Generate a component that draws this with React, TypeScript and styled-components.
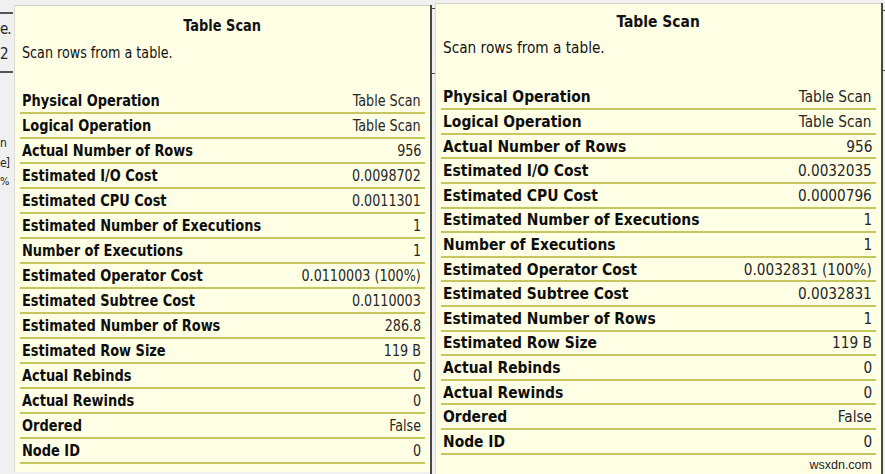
import React from "react";
import styled, { createGlobalStyle } from "styled-components";

const Global = createGlobalStyle`
  html, body { margin: 0; padding: 0; background: #f0f0f0; }
  body { width: 885px; height: 474px; overflow: hidden; }
`;

const Page = styled.div`
  display: flex;
  width: 885px;
  height: 474px;
  overflow: hidden;
  background: #f0f0f0;
  font-family: "DejaVu Sans Condensed", "DejaVu Sans", sans-serif;
`;

const Strip = styled.div`
  flex: none;
  width: 14px;
  display: flex;
  flex-direction: column;
  font-size: 15px;
  color: #222;
`;

const StripRule = styled.div<{ $mt: number }>`
  margin-top: ${(p) => p.$mt}px;
  height: 2px;
  width: 13px;
  background: #555;
`;

const StripText = styled.div<{ $mt: number; $fs?: number }>`
  margin-top: ${(p) => p.$mt}px;
  height: 16px;
  line-height: 16px;
  font-size: ${(p) => p.$fs ?? 15}px;
  white-space: nowrap;
  letter-spacing: -1px;
`;

const Panel = styled.div<{ $w: number; $top: number; $h: number }>`
  flex: none;
  box-sizing: border-box;
  width: ${(p) => p.$w}px;
  height: ${(p) => p.$h}px;
  margin-top: ${(p) => p.$top}px;
  background: #ffffe6;
  border-top: 1px solid #d2d2c4;
  border-left: 1px solid #dcdccf;
  overflow: hidden;
  color: #121212;
  font-size: 16px;
  display: flex;
  flex-direction: column;
`;

const Title = styled.div<{ $pt: number }>`
  padding-top: ${(p) => p.$pt}px;
  line-height: 20px;
  height: 20px;
  text-align: center;
  font-weight: bold;
`;

const Subtitle = styled.div<{ $mt: number }>`
  margin-top: ${(p) => p.$mt}px;
  padding-left: 7px;
  line-height: 20px;
  height: 20px;
`;

const Rows = styled.div<{ $mt: number }>`
  margin: ${(p) => p.$mt}px 5px 0 5px;
  display: flex;
  flex-direction: column;
`;

const Row = styled.div<{ $h: number }>`
  box-sizing: border-box;
  height: ${(p) => p.$h}px;
  border-bottom: 2px solid #c6c65e;
  display: flex;
  align-items: center;
  justify-content: space-between;
  padding: 0 4px 0 2px;
  line-height: 19px;
`;

const Label = styled.span`
  font-weight: bold;
  color: #0e0e0e;
`;

const Value = styled.span`
  color: #262626;
`;

const Sq = styled.span<{ $sx: number; $o: string }>`
  display: inline-block;
  white-space: nowrap;
  transform: scaleX(${(p) => p.$sx});
  transform-origin: ${(p) => p.$o} center;
`;

const Footer = styled.div`
  margin-top: 1px;
  padding-right: 4px;
  margin-right: 5px;
  text-align: right;
  font-family: "Liberation Sans", Arial, sans-serif;
  font-size: 12.5px;
  line-height: 18px;
  color: #1a1a1a;
`;

const Edge = styled.div<{ $w: number; $top: number }>`
  flex: none;
  width: ${(p) => p.$w}px;
  padding-top: ${(p) => p.$top}px;
  display: flex;
  flex-direction: column;
`;

const EdgeLine = styled.div`
  flex: 1;
  width: 100%;
  box-sizing: border-box;
  border-left: 2px solid #484848;
  display: flex;
  flex-direction: column;
`;

const Tick = styled.div<{ $mt: number }>`
  margin-top: ${(p) => p.$mt}px;
  height: 1px;
  width: 3px;
  background: #484848;
`;

type Item = [string, string];

const leftRows: Item[] = [
  ["Physical Operation", "Table Scan"],
  ["Logical Operation", "Table Scan"],
  ["Actual Number of Rows", "956"],
  ["Estimated I/O Cost", "0.0098702"],
  ["Estimated CPU Cost", "0.0011301"],
  ["Estimated Number of Executions", "1"],
  ["Number of Executions", "1"],
  ["Estimated Operator Cost", "0.0110003 (100%)"],
  ["Estimated Subtree Cost", "0.0110003"],
  ["Estimated Number of Rows", "286.8"],
  ["Estimated Row Size", "119 B"],
  ["Actual Rebinds", "0"],
  ["Actual Rewinds", "0"],
  ["Ordered", "False"],
  ["Node ID", "0"],
];

const rightRows: Item[] = [
  ["Physical Operation", "Table Scan"],
  ["Logical Operation", "Table Scan"],
  ["Actual Number of Rows", "956"],
  ["Estimated I/O Cost", "0.0032035"],
  ["Estimated CPU Cost", "0.0000796"],
  ["Estimated Number of Executions", "1"],
  ["Number of Executions", "1"],
  ["Estimated Operator Cost", "0.0032831 (100%)"],
  ["Estimated Subtree Cost", "0.0032831"],
  ["Estimated Number of Rows", "1"],
  ["Estimated Row Size", "119 B"],
  ["Actual Rebinds", "0"],
  ["Actual Rewinds", "0"],
  ["Ordered", "False"],
  ["Node ID", "0"],
];

type TipProps = {
  w: number;
  top: number;
  h: number;
  sx: number;
  lx: number;
  titlePt: number;
  subMt: number;
  rowsMt: number;
  rowH: number;
  rows: Item[];
  footer?: string;
};

function Tip({ w, top, h, sx, lx, titlePt, subMt, rowsMt, rowH, rows, footer }: TipProps) {
  return (
    <Panel $w={w} $top={top} $h={h}>
      <Title $pt={titlePt}>
        <Sq $sx={lx} $o="center">Table Scan</Sq>
      </Title>
      <Subtitle $mt={subMt}>
        <Sq $sx={sx} $o="left">Scan rows from a table.</Sq>
      </Subtitle>
      <Rows $mt={rowsMt}>
        {rows.map(([k, v]) => (
          <Row key={k} $h={rowH}>
            <Label>
              <Sq $sx={lx} $o="left">{k}</Sq>
            </Label>
            <Value>
              <Sq $sx={sx} $o="right">{v}</Sq>
            </Value>
          </Row>
        ))}
      </Rows>
      {footer && <Footer>{footer}</Footer>}
    </Panel>
  );
}

export default function App() {
  return (
    <Page>
      <Global />
      <Strip>
        <StripRule $mt={12} />
        <StripText $mt={7}>e.</StripText>
        <StripText $mt={9}>2</StripText>
        <StripRule $mt={9} />
        <StripText $mt={62} $fs={12}>n</StripText>
        <StripText $mt={4} $fs={12}>e]</StripText>
        <StripText $mt={3} $fs={11}>%</StripText>
      </Strip>
      <Tip
        w={416}
        top={5}
        h={467}
        sx={0.885}
        lx={0.9}
        titlePt={10}
        subMt={7}
        rowsMt={26}
        rowH={25}
        rows={leftRows}
      />
      <Edge $w={5} $top={5}>
        <EdgeLine>
          <Tick $mt={3} />
          <Tick $mt={64} />
        </EdgeLine>
      </Edge>
      <Tip
        w={446}
        top={3}
        h={480}
        sx={0.95}
        lx={0.965}
        titlePt={8}
        subMt={6}
        rowsMt={27.7}
        rowH={24.6}
        rows={rightRows}
        footer="wsxdn.com"
      />
      <Edge $w={4} $top={3}>
        <EdgeLine>
          <Tick $mt={7} />
          <Tick $mt={59} />
        </EdgeLine>
      </Edge>
    </Page>
  );
}
